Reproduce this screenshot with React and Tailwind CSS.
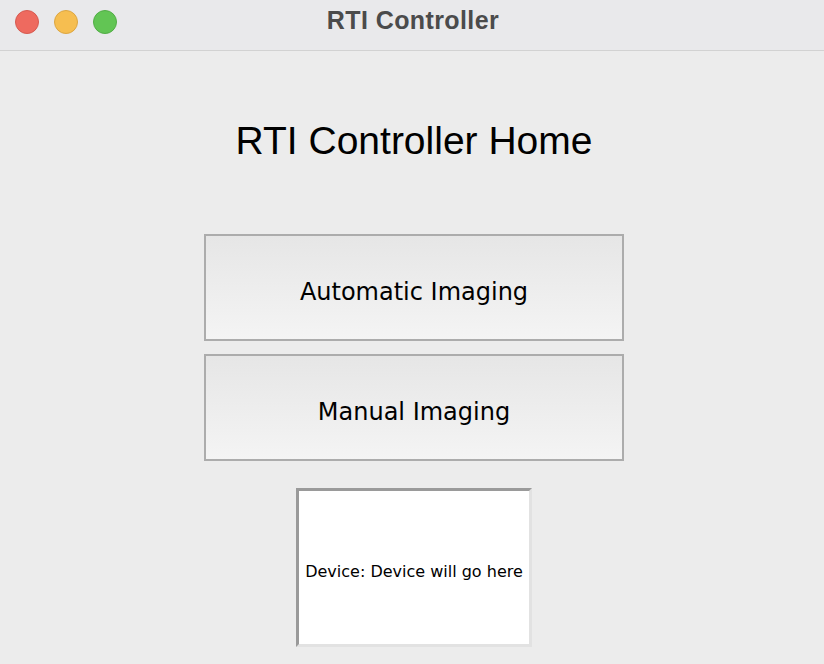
export default function App() {
  return (
    <div
      className="w-[824px] h-[664px] bg-[#ececec] flex flex-col overflow-hidden"
      style={{ fontFamily: '"Liberation Sans", Arial, sans-serif' }}
    >
      {/* title bar */}
      <div className="h-[51px] shrink-0 bg-[#e9e9eb] border-b border-[#d2d2d2] flex items-center relative">
        <div className="flex items-center gap-[15px] pl-[15px] -mt-[7px]">
          <span className="w-[24px] h-[24px] rounded-full bg-[#ee6a5f] border border-[#d65a50]" />
          <span className="w-[24px] h-[24px] rounded-full bg-[#f6be50] border border-[#dca642]" />
          <span className="w-[24px] h-[24px] rounded-full bg-[#62c554] border border-[#52ad46]" />
        </div>
        <div className="absolute inset-x-0 top-[4px] pl-[2px] text-center text-[25px] leading-[32px] font-bold text-[#4b4b4b] tracking-[0.4px]">
          RTI Controller
        </div>
      </div>

      <div className="flex flex-col items-center">
        <h1 className="mt-[66px] pl-[4px] text-[39px] leading-[48px] text-black">RTI Controller Home</h1>

        <div className="mt-[69px] ml-[4px] flex flex-col gap-[13px]">
          {["Automatic Imaging", "Manual Imaging"].map((t) => (
            <button
              key={t}
              className="w-[420px] h-[107px] pt-[8px] border-2 border-[#acacac] bg-gradient-to-b from-[#e6e6e6] to-[#f4f4f4] text-[24px] text-black"
              style={{ fontFamily: '"DejaVu Sans", Verdana, sans-serif' }}
            >
              {t}
            </button>
          ))}
        </div>

        <div
          className="mt-[27px] ml-[4px] w-[236px] h-[159px] bg-white border-[3px] border-t-[#9a9a9a] border-l-[#9a9a9a] border-r-[#e2e2e2] border-b-[#e2e2e2] flex items-center justify-center pt-[8px] text-[16px] text-black"
          style={{ fontFamily: '"DejaVu Sans", Verdana, sans-serif' }}
        >
          Device: Device will go here
        </div>
      </div>
    </div>
  );
}
